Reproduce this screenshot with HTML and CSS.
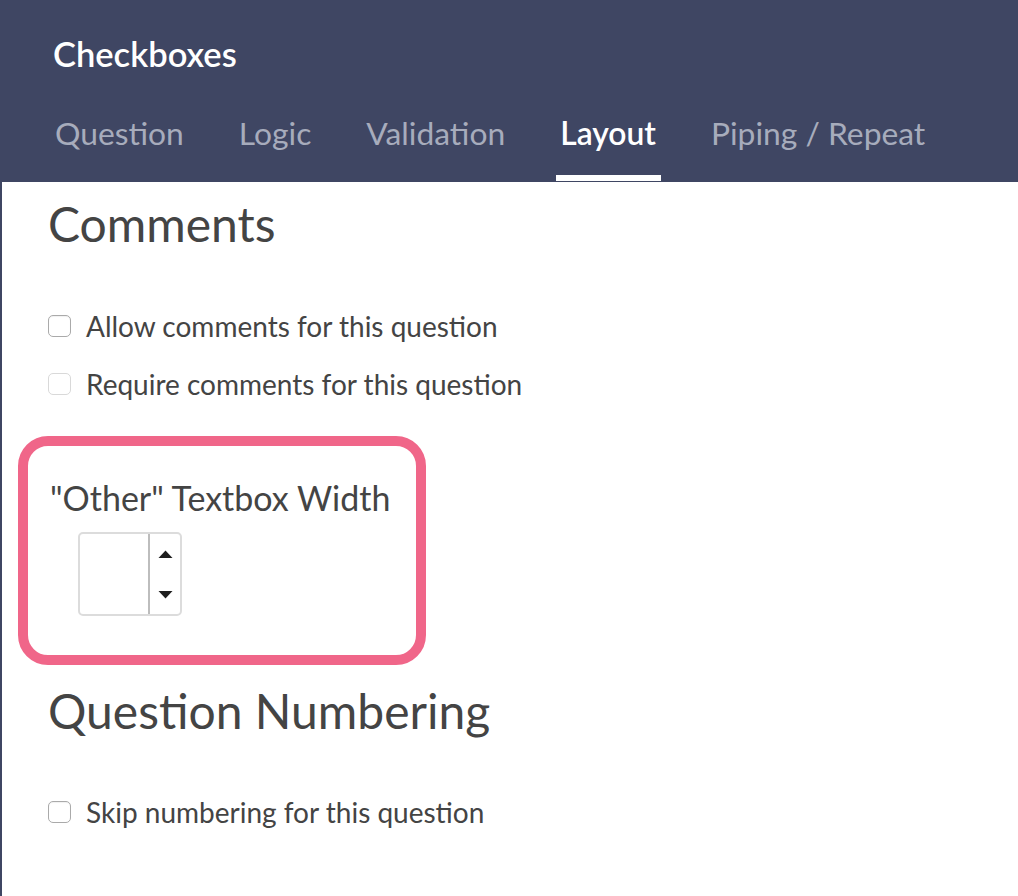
FILE: index.html
```html
<!DOCTYPE html>
<html>
<head>
<meta charset="utf-8">
<link rel="stylesheet" href="styles.css">
</head>
<body>
<div class="page">
  <header class="header">
    <h1 class="title">Checkboxes</h1>
    <nav class="tabs">
      <span class="tab">Question</span>
      <span class="tab">Logic</span>
      <span class="tab">Validation</span>
      <span class="tab active">Layout</span>
      <span class="tab">Piping / Repeat</span>
    </nav>
  </header>
  <main class="content">
    <h2 class="section-title comments">Comments</h2>
    <label class="check first"><span class="box"></span>Allow comments for this question</label>
    <label class="check second disabled"><span class="box"></span>Require comments for this question</label>
    <div class="highlight">
      <div class="field-label">"Other" Textbox Width</div>
      <div class="spinner">
        <div class="spin-value"></div>
        <div class="spin-arrows">
          <svg width="15" height="8" viewBox="0 0 15 8"><path d="M0.5 8 L7.5 0.5 L14.5 8 Z" fill="#1e1e1e"/></svg>
          <svg width="15" height="8" viewBox="0 0 15 8"><path d="M0.5 0 L7.5 7.5 L14.5 0 Z" fill="#1e1e1e"/></svg>
        </div>
      </div>
    </div>
    <h2 class="section-title numbering">Question Numbering</h2>
    <label class="check skip"><span class="box"></span>Skip numbering for this question</label>
  </main>
</div>
</body>
</html>
```
FILE: styles.css
```css
html, body {
  margin: 0;
  padding: 0;
  background: #fff;
}
body {
  font-family: Lato, "Open Sans", sans-serif;
  color: #444;
}
.page {
  width: 1018px;
  height: 896px;
  border-left: 2px solid #3f4663;
  box-sizing: border-box;
  overflow: hidden;
}
.header {
  background: #3f4663;
  height: 182px;
  margin-left: -2px;
  padding-left: 53px;
  padding-top: 33px;
  box-sizing: border-box;
}
.title {
  margin: 0;
  font-size: 34.5px;
  font-weight: 600;
  color: #fff;
  line-height: 41.4px;
}
.tabs {
  display: flex;
  gap: 55px;
  margin-top: 40px;
  margin-left: 2px;
}
.tab {
  font-size: 31.8px;
  line-height: 38px;
  color: #a7acbc;
  padding-bottom: 23px;
  border-bottom: 6px solid transparent;
  font-weight: 400;
}
.tab.active {
  color: #fff;
  border-bottom-color: #fff;
  padding-left: 4px;
  padding-right: 5px;
  margin-left: -4px;
  margin-right: -5px;
  font-weight: 600;
}
.content {
  padding-left: 46px;
}
.section-title {
  margin: 0;
  font-weight: 400;
  font-size: 48px;
  line-height: 57.6px;
  color: #444;
}
.comments {
  margin-top: 13px;
}
.check {
  display: flex;
  align-items: center;
  gap: 15px;
  font-size: 28px;
  line-height: 34px;
  color: #444;
}
.check.first {
  margin-top: 56px;
}
.check.second {
  margin-top: 24px;
}
.box {
  width: 23px;
  height: 22px;
  border: 1px solid #aaa;
  border-radius: 5px;
  box-sizing: border-box;
  box-shadow: inset 0 1px 1px rgba(0, 0, 0, 0.06);
}
.check.disabled .box {
  border-color: #d9d9d9;
  box-shadow: none;
}
.highlight {
  width: 408px;
  height: 229px;
  box-sizing: border-box;
  border: 10px solid #f06689;
  border-radius: 30px;
  margin-left: -30px;
  margin-top: 35px;
  padding: 32px 0 0 22px;
}
.field-label {
  font-size: 34px;
  line-height: 40.8px;
}
.spinner {
  display: flex;
  width: 104px;
  height: 84px;
  margin-top: 14px;
  margin-left: 28px;
  border: 2px solid #dcdcdc;
  border-radius: 5px;
  box-sizing: border-box;
}
.spin-value {
  width: 68px;
  border-right: 2px solid #bdbdbd;
}
.spin-arrows {
  flex: 1;
  display: flex;
  flex-direction: column;
  justify-content: space-between;
  align-items: center;
  padding: 16px 0 15px 0;
}
.numbering {
  margin-top: 17px;
}
.check.skip {
  margin-top: 56px;
}
```
